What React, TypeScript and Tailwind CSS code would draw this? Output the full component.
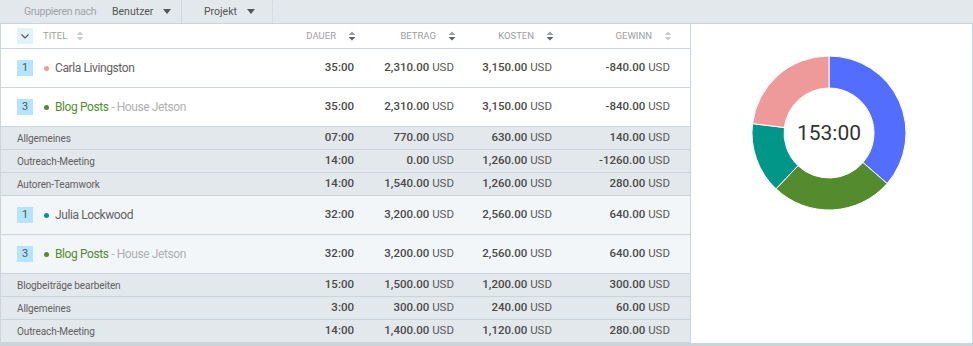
import React from "react";

type Row =
  | { kind: "main"; badge: string; dot: string; name: string; project?: string; tint?: boolean; vals: string[] }
  | { kind: "sub"; name: string; vals: string[] };

const rows: Row[] = [
  { kind: "main", badge: "1", dot: "bg-[#ef9a9a]", name: "Carla Livingston", vals: ["35:00", "2,310.00", "3,150.00", "-840.00"] },
  { kind: "main", badge: "3", dot: "bg-[#558b2f]", name: "Blog Posts", project: "House Jetson", vals: ["35:00", "2,310.00", "3,150.00", "-840.00"] },
  { kind: "sub", name: "Allgemeines", vals: ["07:00", "770.00", "630.00", "140.00"] },
  { kind: "sub", name: "Outreach-Meeting", vals: ["14:00", "0.00", "1,260.00", "-1260.00"] },
  { kind: "sub", name: "Autoren-Teamwork", vals: ["14:00", "1,540.00", "1,260.00", "280.00"] },
  { kind: "main", badge: "1", dot: "bg-[#009688]", name: "Julia Lockwood", tint: true, vals: ["32:00", "3,200.00", "2,560.00", "640.00"] },
  { kind: "main", badge: "3", dot: "bg-[#558b2f]", name: "Blog Posts", project: "House Jetson", tint: true, vals: ["32:00", "3,200.00", "2,560.00", "640.00"] },
  { kind: "sub", name: "Blogbeiträge bearbeiten", vals: ["15:00", "1,500.00", "1,200.00", "300.00"] },
  { kind: "sub", name: "Allgemeines", vals: ["3:00", "300.00", "240.00", "60.00"] },
  { kind: "sub", name: "Outreach-Meeting", vals: ["14:00", "1,400.00", "1,120.00", "280.00"] },
];

const grid = "grid grid-cols-[290px_65px_100px_98px_118px] items-center";

function SortIcon({ dark, gap = "ml-[12px]" }: { dark?: boolean; gap?: string }) {
  const c = dark ? "#5f6368" : "#c8ccd0";
  return (
    <svg width="8" height="10" viewBox="0 0 8 10" className={`${gap} shrink-0`}>
      <path d="M0.5 4 L4 0.5 L7.5 4 Z" fill={dark ? "#9aa0a6" : c} />
      <path d="M0.5 6 L4 9.5 L7.5 6 Z" fill={c} />
    </svg>
  );
}

function Caret() {
  return (
    <svg width="8" height="5" viewBox="0 0 8 5" className="ml-[10px]">
      <path d="M0 0 L8 0 L4 5 Z" fill="#555" />
    </svg>
  );
}

function Money({ v }: { v: string }) {
  return (
    <span>
      <span className="font-medium text-[#4a4a4a]">{v}</span>
      <span className="text-[#5a5a5a]"> USD</span>
    </span>
  );
}

function Values({ vals }: { vals: string[] }) {
  return (
    <>
      <div className="text-right font-medium text-[#4a4a4a] pr-[2px]">{vals[0]}</div>
      <div className="text-right pr-[2px]"><Money v={vals[1]} /></div>
      <div className="text-right pr-[2px]"><Money v={vals[2]} /></div>
      <div className="text-right pr-[2px]"><Money v={vals[3]} /></div>
    </>
  );
}

function arc(cx: number, cy: number, r1: number, r2: number, a0: number, a1: number) {
  const p = (r: number, a: number) => {
    const rad = ((a - 90) * Math.PI) / 180;
    return `${(cx + r * Math.cos(rad)).toFixed(2)} ${(cy + r * Math.sin(rad)).toFixed(2)}`;
  };
  const large = a1 - a0 > 180 ? 1 : 0;
  return `M${p(r1, a0)} A${r1} ${r1} 0 ${large} 1 ${p(r1, a1)} L${p(r2, a1)} A${r2} ${r2} 0 ${large} 0 ${p(r2, a0)} Z`;
}

const segments = [
  { from: 0, to: 131, color: "#536dfe" },
  { from: 131, to: 223.5, color: "#558b2f" },
  { from: 223.5, to: 277, color: "#009688" },
  { from: 277, to: 360, color: "#ef9a9a" },
];

export default function App() {
  return (
    <div className="w-[973px] h-[346px] bg-[#c9d4dc] flex flex-col font-['Roboto',sans-serif] overflow-hidden">
      {/* Toolbar */}
      <div className="h-[24px] shrink-0 bg-[#e3e8ec] border-b border-[#cbd5dc] flex items-center text-[10.5px] whitespace-nowrap">
        <span className="pl-[24px] w-[100px] shrink-0 text-[#a0a4a8] tracking-[-0.3px]">Gruppieren nach</span>
        <div className="w-[82px] h-full flex items-center pl-[12px] border-r border-dotted border-[#c9d2d8] text-[#555]">
          Benutzer
          <Caret />
        </div>
        <div className="w-[91px] h-full flex items-center pl-[22px] border-r border-dotted border-[#c9d2d8] text-[#555]">
          Projekt
          <Caret />
        </div>
      </div>

      <div className="h-[319px] shrink-0 flex">
        {/* Table */}
        <div className="w-[691px] border-l border-r border-[#cbd5dc] flex flex-col">
          <div className={`${grid} h-[25px] bg-white border-b border-[#cbd5dc] text-[9.5px] text-[#9e9e9e] uppercase`}>
            <div className="flex items-center pl-[16px]">
              <div className="w-[16px] h-[16px] bg-[#e1f2fb] flex items-center justify-center">
                <svg width="8" height="5" viewBox="0 0 8 5">
                  <path d="M0.5 0.5 L4 4 L7.5 0.5" fill="none" stroke="#555" strokeWidth="1.2" />
                </svg>
              </div>
              <span className="ml-[10px]">Titel</span>
              <SortIcon gap="ml-[9px]" />
            </div>
            <div className="flex items-center justify-end">Dauer<SortIcon dark /></div>
            <div className="flex items-center justify-end">Betrag<SortIcon dark /></div>
            <div className="flex items-center justify-end">Kosten<SortIcon dark /></div>
            <div className="flex items-center justify-end">Gewinn<SortIcon /></div>
          </div>

          {rows.map((r, i) =>
            r.kind === "main" ? (
              <div
                key={i}
                className={`${grid} h-[39px] border-b border-[#cbd5dc] text-[11.5px] ${r.tint ? "bg-[#f3f6f9]" : "bg-white"}`}
              >
                <div className="flex items-center pl-[16px]">
                  <div className="w-[16px] h-[16px] bg-[#b3e5fc] text-[11px] text-[#555] flex items-center justify-center">
                    {r.badge}
                  </div>
                  <span className={`ml-[11px] w-[5px] h-[5px] rounded-full ${r.dot}`} />
                  <span className="ml-[6px] text-[12px] tracking-[-0.4px]">
                    {r.project ? (
                      <>
                        <span className="text-[#558b2f]">{r.name}</span>
                        <span className="text-[#b0b0b0]"> - {r.project}</span>
                      </>
                    ) : (
                      <span className="text-[#616161]">{r.name}</span>
                    )}
                  </span>
                </div>
                <Values vals={r.vals} />
              </div>
            ) : (
              <div key={i} className={`${grid} h-[23px] bg-[#e3e8ec] border-b border-[#cbd5dc] text-[11.5px]`}>
                <div className="pl-[16px] text-[10px] tracking-[-0.1px] text-[#616161]">{r.name}</div>
                <Values vals={r.vals} />
              </div>
            ),
          )}
        </div>

        {/* Chart */}
        <div className="flex-1 bg-white border-r border-[#cbd5dc] flex justify-center pr-[5px]">
          <svg width="160" height="160" viewBox="0 0 160 160" className="mt-[29px]">
            {segments.map((s) => (
              <path key={s.from} d={arc(80, 80, 77, 45, s.from, s.to)} fill={s.color} stroke="#fff" strokeWidth="1" />
            ))}
            <text x="80" y="80" textAnchor="middle" dominantBaseline="central" fontSize="21" fill="#333" fontFamily="Roboto, sans-serif">
              153:00
            </text>
          </svg>
        </div>
      </div>
    </div>
  );
}
